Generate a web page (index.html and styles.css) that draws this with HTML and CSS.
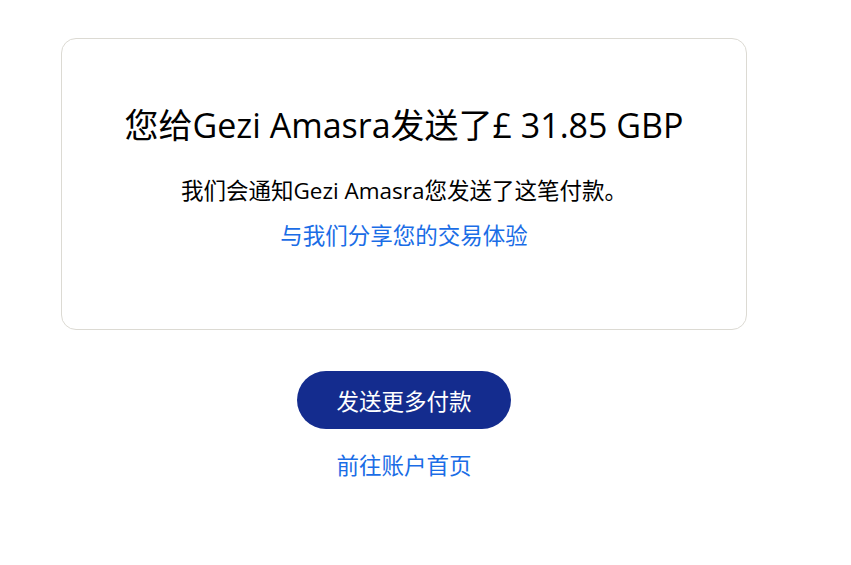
FILE: index.html
```html
<!DOCTYPE html>
<html lang="zh-CN">
<head>
<meta charset="utf-8">
<link rel="stylesheet" href="styles.css">
</head>
<body>
<main class="page">
  <section class="card">
    <h1 class="title">您给Gezi Amasra发送了£ 31.85 GBP</h1>
    <p class="note">我们会通知Gezi Amasra您发送了这笔付款。</p>
    <a class="link" href="#">与我们分享您的交易体验</a>
  </section>
  <div class="actions">
    <a class="btn" href="#">发送更多付款</a>
    <a class="link" href="#">前往账户首页</a>
  </div>
</main>
</body>
</html>
```
FILE: styles.css
```css
html, body {
  margin: 0;
  padding: 0;
  background: #ffffff;
}
body {
  font-family: "Open Sans", "Noto Sans CJK SC", sans-serif;
  color: #000000;
}
.page {
  width: 686px;
  padding: 38px 0 0 61px;
  display: flex;
  flex-direction: column;
}
.card {
  box-sizing: border-box;
  height: 292px;
  border: 1px solid #dcdad3;
  border-radius: 15px;
  display: flex;
  flex-direction: column;
  align-items: center;
  padding-top: 60px;
}
.title {
  margin: 0;
  font-size: 34px;
  font-weight: 400;
  line-height: 52px;
  letter-spacing: 0;
}
.note {
  margin: 25px 0 0 0;
  font-size: 22.5px;
  line-height: 30px;
}
.link {
  color: #1a6de6;
  text-decoration: none;
  font-size: 22.5px;
  line-height: 30px;
}
.card .link {
  margin-top: 15px;
}
.actions {
  display: flex;
  flex-direction: column;
  align-items: center;
  margin-top: 41px;
}
.btn {
  display: flex;
  align-items: center;
  justify-content: center;
  width: 214px;
  height: 58px;
  box-sizing: border-box;
  border-radius: 29px;
  background: #142c8e;
  color: #ffffff;
  text-decoration: none;
  font-size: 22.5px;
}
.actions .link {
  margin-top: 22px;
}
```
